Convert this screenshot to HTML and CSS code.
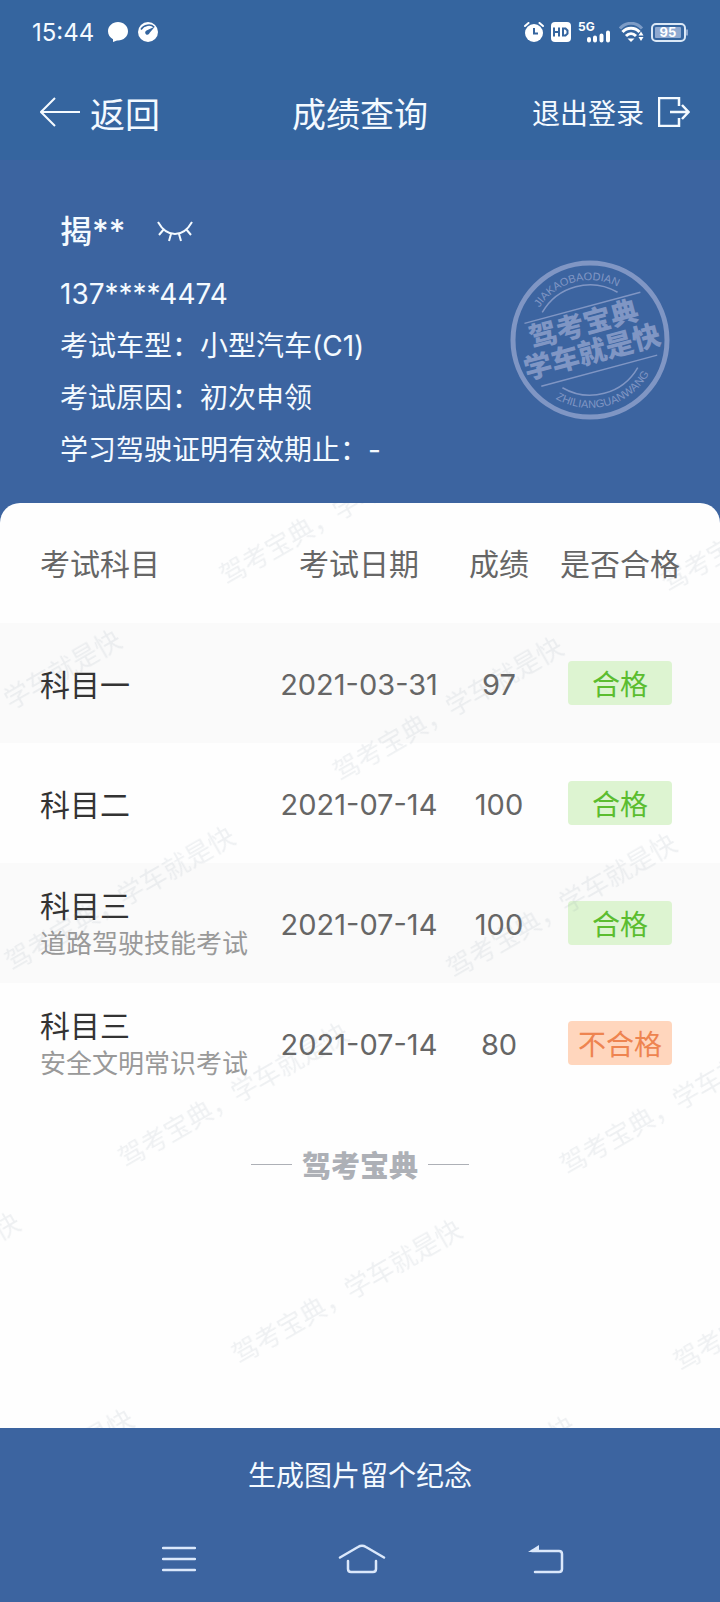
FILE: index.html
```html
<!DOCTYPE html>
<html lang="zh-CN">
<head>
    <meta charset="UTF-8">
    <meta name="viewport" content="width=device-width, initial-scale=1.0">
    <title>成绩查询</title>
    <link rel="stylesheet" href="styles.css">
</head>
<body>

<div class="top">
    <div class="status">
        <div class="status-left">
            <span class="time">15:44</span>
            <svg width="20" height="20" viewBox="0 0 20 20"><path d="M10 0C4.500 0 0 4 0 9.200c0 3.600 2 6.500 5 8V20l4-1.600h1c5.500 0 10-4 10-9.200S15.500 0 10 0z" fill="#fff"/></svg>
            <svg width="20" height="20" viewBox="0 0 20 20">
                <circle cx="10" cy="10" r="10" fill="#fff"/>
                <path d="M3 7.500C6 2.500 13 2 16 5" fill="none" stroke="#35659f" stroke-width="1.500"/>
                <path d="M17 4.500L11.500 11a2.200 2.200 0 1 1-3-2.500z" fill="#35659f"/>
            </svg>
        </div>
        <div class="status-right">
            <svg width="20" height="20" viewBox="0 0 20 20">
                <circle cx="10" cy="11" r="9" fill="#fff"/>
                <path d="M1 4l3.500-3M19 4l-3.500-3" stroke="#fff" stroke-width="2" stroke-linecap="round"/>
                <path d="M10 6v5.500h4" fill="none" stroke="#35659f" stroke-width="2"/>
            </svg>
            <svg width="20" height="20" viewBox="0 0 20 20">
                <rect width="20" height="20" rx="4" fill="#fff"/>
                <path d="M3 5.500v9M8 5.500v9M3 10h5M12 6.500h2.500l2 2v3l-2 2H12z" fill="none" stroke="#35659f" stroke-width="2"/>
            </svg>
            <svg width="34" height="26" viewBox="0 0 34 26">
                <text class="net" x="0" y="12">5G</text>
                <path d="M11 20v1.500M17 18.500v3M23.500 16.500v5M30 13.500v8" stroke="#fff" stroke-width="4" stroke-linecap="round"/>
            </svg>
            <svg width="25" height="20" viewBox="0 0 25 20">
                <path d="M1 6.500C7-.5 17-.5 23 6.500" fill="none" stroke="#7d9cc6" stroke-width="3"/>
                <path d="M3.500 10c4.500-5 12.500-5 17 0M7 14c3-3 7-3 10 0" fill="none" stroke="#fff" stroke-width="3"/>
                <path d="M8.500 16.500h7L12 20z" fill="#fff"/>
                <path d="M22 9.500l2.500 4h-5zM22 19l2.500-4h-5z" fill="#fff"/>
            </svg>
            <svg width="37" height="19" viewBox="0 0 37 19">
                <rect x="1" y="1" width="33" height="17" rx="4" fill="none" stroke="#dbe8f6" stroke-width="2"/>
                <rect x="4" y="4" width="26" height="11" rx="1" fill="#8fa9d0"/>
                <path d="M36 6.500v6" stroke="#8fa9d0" stroke-width="2"/>
                <text class="battery" x="17" y="14">95</text>
            </svg>
        </div>
    </div>

    <header class="nav">
        <a class="back" href="#">
            <svg width="40" height="30" viewBox="0 0 40 30"><path d="M15 1L1 15l14 14M1 15h39" fill="none" stroke="#f4faff" stroke-width="2"/></svg>
            返回
        </a>
        <h1>成绩查询</h1>
        <button class="logout" type="button">
            退出登录
            <svg width="32" height="30" viewBox="0 0 32 30"><path d="M21 9V1H1v28h20v-8M12 15h18M24 8l6.500 7L24 22" fill="none" stroke="#f4faff" stroke-width="2.500"/></svg>
        </button>
    </header>
</div>

<section class="info">
    <div class="info-text">
        <div class="name">
            揭**
            <button class="eye" type="button" aria-label="显示姓名">
                <svg width="36" height="22" viewBox="0 0 36 22"><path d="M1 1c9 16 25 16 34 0M7 8l-5 6M14 13l-2 7M22 13l2 7M29 8l5 6" fill="none" stroke="#f4faff" stroke-width="2"/></svg>
            </button>
        </div>
        <p>137****4474</p>
        <p>考试车型：小型汽车(C1)</p>
        <p>考试原因：初次申领</p>
        <p>学习驾驶证明有效期止：-</p>
    </div>
    <svg class="stamp" width="160" height="160" viewBox="-80 -80 160 160">
        <defs>
            <path id="arc-top" d="M-60 0A60 60 0 0 1 60 0"/>
            <path id="arc-bottom" d="M-68 0A68 68 0 0 0 68 0"/>
        </defs>
        <circle r="77" fill="none" stroke="#8096c4" stroke-width="5"/>
        <g transform="rotate(-15)">
            <path d="M-39-39A55 55 0 0 1 39-39M-39 39A55 55 0 0 0 39 39M-59-33H61M-59 32H61" fill="none" stroke="#8096c4" stroke-width="1.500"/>
            <text class="pinyin"><textPath href="#arc-top" startOffset="50%">JIAKAOBAODIAN</textPath></text>
            <text class="pinyin"><textPath href="#arc-bottom" startOffset="50%">ZHILIANGUANWANG</textPath></text>
            <text class="slogan" x="-2" y="-7">驾考宝典</text>
            <text class="slogan" x="-1" y="22">学车就是快</text>
        </g>
    </svg>
</section>

<main class="panel">
    <table class="scores">
        <thead>
            <tr>
                <th class="subject">考试科目</th>
                <th class="date">考试日期</th>
                <th class="score">成绩</th>
                <th class="result">是否合格</th>
            </tr>
        </thead>
        <tbody>
            <tr>
                <td class="subject">科目一</td>
                <td>2021-03-31</td>
                <td>97</td>
                <td class="result"><span class="tag pass">合格</span></td>
            </tr>
            <tr>
                <td class="subject">科目二</td>
                <td>2021-07-14</td>
                <td>100</td>
                <td class="result"><span class="tag pass">合格</span></td>
            </tr>
            <tr>
                <td class="subject">科目三<small>道路驾驶技能考试</small></td>
                <td>2021-07-14</td>
                <td>100</td>
                <td class="result"><span class="tag pass">合格</span></td>
            </tr>
            <tr>
                <td class="subject">科目三<small>安全文明常识考试</small></td>
                <td>2021-07-14</td>
                <td>80</td>
                <td class="result"><span class="tag fail">不合格</span></td>
            </tr>
        </tbody>
    </table>

    <div class="brand">驾考宝典</div>

    <!-- marca de agua -->
    <svg class="watermark" aria-hidden="true">
        <defs>
            <pattern id="mark" width="379" height="227" patternUnits="userSpaceOnUse" patternTransform="translate(131 11) rotate(-30)">
                <text x="47" y="110">驾考宝典，学车就是快</text>
            </pattern>
        </defs>
        <rect width="100%" height="100%" fill="url(#mark)"/>
    </svg>
</main>

<button class="save" type="button">生成图片留个纪念</button>

<nav class="system">
    <button type="button" aria-label="菜单">
        <svg width="34" height="28" viewBox="0 0 34 28"><path d="M1 3h32M1 14h32M1 25h32" stroke="#dbe8fb" stroke-width="2.500" stroke-linecap="round"/></svg>
    </button>
    <button type="button" aria-label="主页">
        <svg width="48" height="30" viewBox="0 0 48 30"><path d="M2 13.500L20 3q4-2.500 8 0l18 10.500M10 17v8q0 3 3 3h22q3 0 3-3v-8" fill="none" stroke="#dbe8fb" stroke-width="2.500" stroke-linecap="round"/></svg>
    </button>
    <button type="button" aria-label="返回">
        <svg width="36" height="30" viewBox="0 0 36 30"><path d="M4 7h27q3 0 3 3v15q0 3-3 3H7" fill="none" stroke="#dbe8fb" stroke-width="2.500" stroke-linecap="round"/><path d="M0 8L11 1v7z" fill="#dbe8fb"/></svg>
    </button>
</nav>

</body>
</html>
```

FILE: styles.css
```css
* {
    box-sizing: border-box;
}
body {
    margin: 0;
    min-height: 100vh;
    display: flex;
    flex-direction: column;
    background-color: #3c64a0;
    color: #f4faff;
    font-family: Inter, "Noto Sans CJK SC", sans-serif;
    font-size: 28px;
}
button {
    border: 0;
    padding: 0;
    background: none;
    color: inherit;
    font: inherit;
    cursor: pointer;
}
svg {
    display: block;
}

/* barra superior */
.top {
    background-color: #35659f;
}
.status {
    display: flex;
    justify-content: space-between;
    align-items: center;
    height: 64px;
    padding: 0 32px;
}
.status-left {
    display: flex;
    align-items: center;
    gap: 10px;
}
.status-right {
    display: flex;
    align-items: center;
    gap: 7px;
}
.time {
    font-size: 24px;
    margin-right: 4px;
}
.net {
    font-size: 12px;
    font-weight: bold;
    fill: #fff;
}
.battery {
    font-size: 13px;
    font-weight: bold;
    fill: #fff;
    text-anchor: middle;
}
.nav {
    display: grid;
    grid-template-columns: 1fr auto 1fr;
    align-items: center;
    height: 96px;
    padding: 0 30px;
}
.nav h1 {
    margin: 0;
    font-size: 34px;
    font-weight: normal;
}
.back {
    display: flex;
    align-items: center;
    gap: 10px;
    padding-left: 10px;
    color: inherit;
    font-size: 35px;
    text-decoration: none;
}
.logout {
    display: flex;
    justify-content: flex-end;
    align-items: center;
    gap: 14px;
}

/* datos del alumno */
.info {
    display: flex;
    justify-content: space-between;
    align-items: center;
    padding: 48px 50px 27px 60px;
}
.name {
    display: flex;
    align-items: center;
    gap: 32px;
    margin-bottom: 12px;
    font-size: 32px;
    font-weight: 500;
    line-height: 48px;
}
.info p {
    margin: 0;
    line-height: 52px;
}
.stamp {
    margin-bottom: 4px;
}
.pinyin {
    font-family: "Liberation Sans", Arial, sans-serif;
    font-size: 11px;
    fill: #8096c4;
    text-anchor: middle;
}
.slogan {
    font-size: 28px;
    font-weight: 900;
    fill: #8096c4;
    text-anchor: middle;
}

/* tabla de notas */
.panel {
    position: relative;
    flex: 1;
    overflow: hidden;
    background-color: #fefefe;
    border-radius: 20px 20px 0 0;
    color: #666;
}
.scores {
    width: 100%;
    table-layout: fixed;
    border-collapse: collapse;
    text-align: center;
}
.scores tr {
    height: 120px;
}
.scores tbody tr:nth-child(odd) {
    background-color: #fafafa;
}
.scores th {
    padding: 0 0 2px;
    font-size: 30px;
    font-weight: normal;
}
.scores td {
    padding: 2px 0 0;
    font-size: 29px;
}
.scores .subject {
    padding-left: 40px;
    text-align: left;
}
.scores td.subject {
    padding-top: 4px;
    color: #333;
    font-size: 30px;
    line-height: 38px;
}
.scores .date {
    width: 178px;
}
.scores .score {
    width: 102px;
}
.scores .result {
    width: 170px;
    padding-right: 30px;
}
.scores td.result {
    padding-top: 0;
    font-size: 28px;
}
.subject small {
    display: block;
    color: #999;
    font-size: 26px;
}
.tag {
    display: block;
    width: 104px;
    margin: auto;
    padding-top: 4px;
    border-radius: 4px;
    line-height: 40px;
}
.pass {
    background-color: #ddf4d1;
    color: #5bbd2f;
}
.fail {
    background-color: #ffd6bd;
    color: #ee8450;
}
.brand {
    display: flex;
    justify-content: center;
    align-items: center;
    gap: 10px;
    height: 122px;
    color: #adb0b6;
    font-size: 29px;
    font-weight: 900;
}
.brand::before,
.brand::after {
    content: "";
    width: 41px;
    height: 1px;
    background-color: #adb0b6;
}
.watermark {
    position: absolute;
    top: 0;
    left: 0;
    width: 100%;
    height: 100%;
    pointer-events: none;
}
.watermark text {
    font-size: 26px;
    fill: #8090a0;
    fill-opacity: 0.12;
}

/* botones de abajo */
.save {
    height: 92px;
}
.system {
    display: flex;
    justify-content: space-between;
    align-items: center;
    height: 82px;
    padding: 0 156px 4px 162px;
}
```
